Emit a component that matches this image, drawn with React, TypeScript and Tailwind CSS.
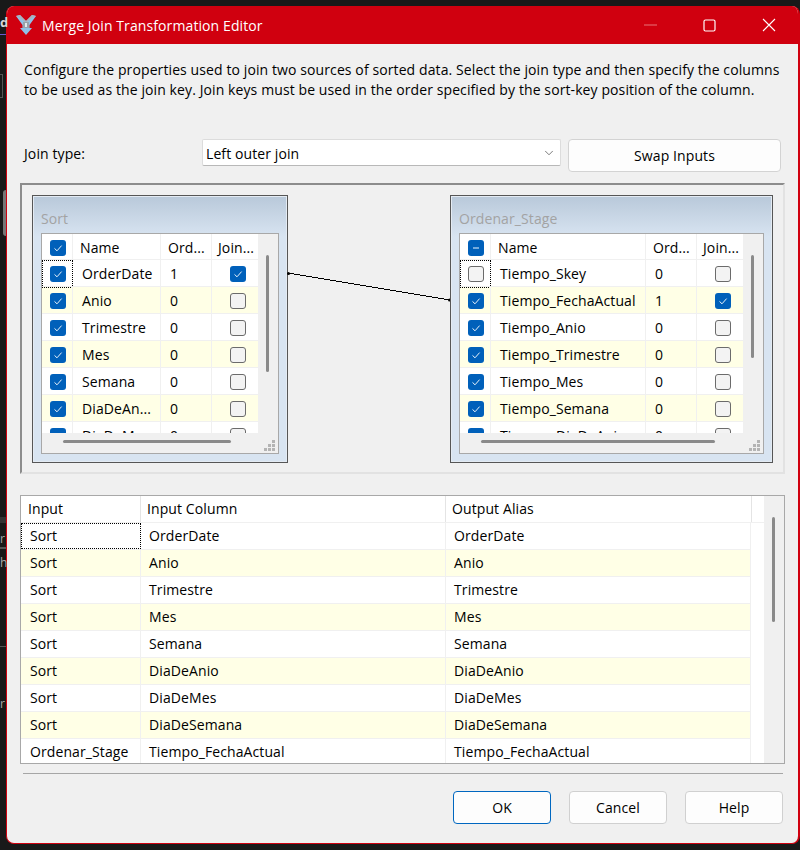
import { Fragment } from 'react'
import { ChevronDown } from 'lucide-react'

const FONT = "font-['Open_Sans','Noto_Sans',sans-serif]"

const sortRows = [
  { on: true, name: 'OrderDate', order: '1', join: true },
  { on: true, name: 'Anio', order: '0', join: false },
  { on: true, name: 'Trimestre', order: '0', join: false },
  { on: true, name: 'Mes', order: '0', join: false },
  { on: true, name: 'Semana', order: '0', join: false },
  { on: true, name: 'DiaDeAn...', order: '0', join: false },
  { on: true, name: 'DiaDeMes', order: '0', join: false },
]

const stageRows = [
  { on: false, name: 'Tiempo_Skey', order: '0', join: false },
  { on: true, name: 'Tiempo_FechaActual', order: '1', join: true },
  { on: true, name: 'Tiempo_Anio', order: '0', join: false },
  { on: true, name: 'Tiempo_Trimestre', order: '0', join: false },
  { on: true, name: 'Tiempo_Mes', order: '0', join: false },
  { on: true, name: 'Tiempo_Semana', order: '0', join: false },
  { on: true, name: 'Tiempo_DiaDeAni', order: '0', join: false },
]

const outputRows = [
  ['Sort', 'OrderDate', 'OrderDate'],
  ['Sort', 'Anio', 'Anio'],
  ['Sort', 'Trimestre', 'Trimestre'],
  ['Sort', 'Mes', 'Mes'],
  ['Sort', 'Semana', 'Semana'],
  ['Sort', 'DiaDeAnio', 'DiaDeAnio'],
  ['Sort', 'DiaDeMes', 'DiaDeMes'],
  ['Sort', 'DiaDeSemana', 'DiaDeSemana'],
  ['Ordenar_Stage', 'Tiempo_FechaActual', 'Tiempo_FechaActual'],
]

function Check({ state }: { state: 'on' | 'off' | 'mixed' }) {
  if (state === 'off') {
    return <div className="h-[16px] w-[16px] rounded-[3px] border-[1.5px] border-[#6b6b6b] bg-[#f3f3f3]" />
  }
  return (
    <div className="flex h-[16px] w-[16px] items-center justify-center rounded-[3px] bg-[#0060ba]">
      <svg width="10" height="10" viewBox="0 0 10 10" fill="none">
        {state === 'on' ? (
          <path d="M1.5 5.4 L4 7.8 L8.6 2.6" stroke="#e8f2fb" strokeWidth="1" />
        ) : (
          <path d="M2 5 H8" stroke="#9cc4e8" strokeWidth="1.4" />
        )}
      </svg>
    </div>
  )
}

function Grip() {
  const dots = [
    [8, 0],
    [4, 4],
    [8, 4],
    [0, 8],
    [4, 8],
    [8, 8],
  ]
  return (
    <svg className="absolute bottom-[2px] right-[3px]" width="11" height="11" viewBox="0 0 11 11">
      {dots.map(([x, y]) => (
        <rect key={`${x}-${y}`} x={x} y={y} width="3" height="3" fill="#b4b4b4" />
      ))}
    </svg>
  )
}

type NodeProps = {
  title: string
  position: string
  cols: string
  tableWidth: string
  vThumb: string
  hThumb: string
  headState: 'on' | 'mixed'
  rows: typeof sortRows
}

function SourceNode({ title, position, cols, tableWidth, vThumb, hThumb, headState, rows }: NodeProps) {
  return (
    <div className={`absolute top-[10px] h-[268px] border border-[#565656] bg-[#d8e4f1] ${position}`}>
      <div className="h-full bg-linear-to-b from-[#b9c9da] to-[#d8e4f1] to-[15%] border border-[#e4ebf3] px-[7px]">
        <div className="h-[36px] pt-[12px] text-[14px] leading-[20px] text-[#a3a3a3]">{title}</div>
        <div className="relative h-[221px] border border-[#a8a8a8] bg-[#f0f0f0]">
          <div className="flex h-[199px]">
            <div className={`h-full overflow-hidden bg-white ${tableWidth}`}>
              <div className={`grid h-[26px] border-b border-[#f0f0f0] ${cols}`}>
                <div className="flex items-center justify-center border-r border-[#f0f0f0] pl-[1px]">
                  <Check state={headState} />
                </div>
                <div className="border-r border-[#f0f0f0] pl-[7px] leading-[27px]">Name</div>
                <div className="border-r border-[#f0f0f0] pl-[7px] leading-[27px]">Ord...</div>
                <div className="pl-[6px] leading-[27px]">Join...</div>
              </div>
              {rows.map((row, i) => (
                <div
                  key={row.name}
                  className={`grid h-[27px] border-b border-[#f0f0f0] ${cols} ${i % 2 === 1 ? 'bg-[#ffffe6]' : 'bg-white'}`}
                >
                  <div
                    className={`flex items-center justify-center pl-[1px] ${
                      i === 0 ? 'border border-dotted border-black' : 'border-r border-[#f0f0f0]'
                    }`}
                  >
                    <Check state={row.on ? 'on' : 'off'} />
                  </div>
                  <div className="truncate border-r border-[#f0f0f0] pl-[9px] leading-[28px]">{row.name}</div>
                  <div className="border-r border-[#f0f0f0] pl-[9px] leading-[28px]">{row.order}</div>
                  <div className="flex items-center justify-center pl-[6px]">
                    <Check state={row.join ? 'on' : 'off'} />
                  </div>
                </div>
              ))}
            </div>
            <div className="w-[20px] pl-[8px] pt-[21px]">
              <div className={`w-[3px] rounded-full bg-[#8a8a8a] ${vThumb}`} />
            </div>
          </div>
          <div className="h-[20px] pt-[7px]">
            <div className={`h-[3px] rounded-full bg-[#8a8a8a] ${hThumb}`} />
          </div>
          <Grip />
        </div>
      </div>
    </div>
  )
}

function DialogButton({ label, primary }: { label: string; primary?: boolean }) {
  return (
    <button
      className={`h-[33px] w-[98px] rounded-[4px] border bg-[#fdfdfd] text-[14px] ${
        primary ? 'border-[#0067c0]' : 'border-[#d0d0d0]'
      }`}
    >
      {label}
    </button>
  )
}

export default function App() {
  return (
    <div className={`relative h-[850px] w-[800px] overflow-hidden bg-[#191919] pl-[6px] pt-[6px] text-[14px] tracking-[0.1px] text-black ${FONT}`}>
      {/* Bits of the window behind */}
      <div className="absolute left-0 top-[13px] text-[13px] font-bold text-[#d5d5d5]">d</div>
      <div className="absolute left-0 top-[34px] h-[1px] w-[6px] bg-[#6a5acd]" />
      <div className="absolute left-0 top-[74px] h-[24px] w-[3px] border-y border-r border-[#555]" />
      <div className="absolute left-[3px] top-[190px] h-[46px] w-[3px] rounded-l bg-[#777]" />
      <div className="absolute left-0 top-[517px] h-[6px] w-[6px] bg-[#333]" />
      <div className="absolute left-0 top-[530px] text-[12px] text-[#aaa]">r</div>
      <div className="absolute left-0 top-[547px] h-[2px] w-[6px] bg-[#555]" />
      <div className="absolute left-0 top-[554px] text-[12px] text-[#aaa]">h</div>
      <div className="absolute left-0 top-[646px] h-[1px] w-[6px] bg-[#555]" />
      <div className="absolute left-0 top-[695px] text-[12px] text-[#aaa]">r</div>

      {/* Dialog window */}
      <div className="flex h-[838px] w-[794px] flex-col overflow-hidden rounded-[8px] border-b-[1px] border-l-[1px] border-r-[2px] border-[#d0000f] bg-[#f0f0f0]">
        {/* Title bar */}
        <div className="flex h-[38px] shrink-0 items-center bg-[#d0000f] pl-[9px] text-white">
          <svg width="20" height="20" viewBox="0 0 20 20" className="mr-[6px] shrink-0">
            <path d="M0 1 L4 0 L10 6 L16 0 L20 1 L13.5 10 L13.5 13 L16 13 L10 20 L4 13 L6.5 13 L6.5 10 Z" fill="#8fc0e8" />
            <path d="M0 1 L4 0 L10 6 L16 0 L20 1 L16 3 L10 8 L4 3 Z" fill="#a9b4bd" />
            <path d="M7 7 H13 V13 H7 Z" fill="#98a2aa" />
            <path d="M9 8 H11 V12 H9 Z" fill="#e4e8ec" />
          </svg>
          <span className="text-[14px]">Merge Join Transformation Editor</span>
          <div className="ml-auto flex items-center">
            <svg width="14" height="2" viewBox="0 0 14 2" className="mr-[45px]">
              <path d="M0 1 H13" stroke="#e8747b" strokeWidth="1" />
            </svg>
            <svg width="13" height="13" viewBox="0 0 13 13" className="mr-[46px]">
              <rect x="1" y="1" width="11" height="11" rx="1.5" fill="none" stroke="white" strokeWidth="1.2" />
            </svg>
            <svg width="14" height="14" viewBox="0 0 14 14" className="mr-[22px]">
              <path d="M1 1 L13 13 M13 1 L1 13" stroke="white" strokeWidth="1.1" />
            </svg>
          </div>
        </div>

        {/* Description */}
        <div className="ml-[17px] mt-[16px] w-[765px] whitespace-nowrap leading-[20px]">
          Configure the properties used to join two sources of sorted data. Select the join type and then specify the columns
          <br />
          to be used as the join key. Join keys must be used in the order specified by the sort-key position of the column.
        </div>

        {/* Join type row */}
        <div className="ml-[17px] mt-[39px] flex h-[33px] items-start">
          <div className="w-[178px] leading-[30px]">Join type:</div>
          <div className="flex h-[27px] w-[359px] items-center justify-between rounded-[2px] border border-[#dcdcdc] border-b-[#b8b8b8] bg-white pl-[3px] pr-[4px]">
            <span className="pt-[1px]">Left outer join</span>
            <ChevronDown size={14} strokeWidth={1.2} className="text-[#444]" />
          </div>
          <button className="ml-[7px] h-[33px] w-[213px] rounded-[4px] border border-[#d3d3d3] bg-[#fdfdfd] text-[14px]">
            Swap Inputs
          </button>
        </div>

        {/* Designer surface */}
        <div className="relative ml-[13px] mt-[11px] h-[291px] w-[765px] shrink-0 border-b-2 border-l-2 border-r-2 border-t-2 border-b-[#e2e2e2] border-l-[#8c8c8c] border-r-[#e2e2e2] border-t-[#8c8c8c]">
          <SourceNode
            title="Sort"
            position="left-[10px] w-[256px]"
            cols="grid-cols-[31px_88px_51px_46px]"
            tableWidth="w-[216px]"
            vThumb="h-[117px]"
            hThumb="ml-[21px] w-[168px]"
            headState="on"
            rows={sortRows}
          />
          <svg className="absolute left-[264px] top-[86px]" width="166" height="32" viewBox="0 0 166 32">
            <path d="M2 2 L164 29" stroke="black" strokeWidth="1" fill="none" shapeRendering="crispEdges" />
            <circle cx="2.5" cy="2.5" r="1.5" fill="black" />
            <circle cx="163.5" cy="29" r="1.5" fill="black" />
          </svg>
          <SourceNode
            title="Ordenar_Stage"
            position="left-[428px] w-[323px]"
            cols="grid-cols-[31px_155px_51px_46px]"
            tableWidth="w-[283px]"
            vThumb="h-[103px]"
            hThumb="ml-[21px] w-[234px]"
            headState="mixed"
            rows={stageRows}
          />
        </div>

        {/* Output columns grid */}
        <div className="ml-[13px] mt-[21px] flex h-[269px] w-[765px] shrink-0 border border-[#a8a8a8] bg-[#f0f0f0]">
          <div className="h-full w-[743px] overflow-hidden bg-white">
            <div className="grid h-[27px] grid-cols-[120px_305px_306px] border-b border-[#f0f0f0]">
              <div className="border-r border-[#e4e4e4] pl-[7px] leading-[26px]">Input</div>
              <div className="border-r border-[#e4e4e4] pl-[6px] leading-[26px]">Input Column</div>
              <div className="border-r border-[#e4e4e4] pl-[6px] leading-[26px]">Output Alias</div>
            </div>
            {outputRows.map((row, i) => (
              <div
                key={row[1]}
                className={`grid h-[27px] w-[730px] grid-cols-[120px_305px_305px] border-b border-r border-[#f0f0f0] ${
                  i % 2 === 1 ? 'bg-[#ffffe6]' : 'bg-white'
                }`}
              >
                {row.map((cell, c) => (
                  <Fragment key={c}>
                    <div
                      className={
                        i === 0 && c === 0
                          ? 'border border-dotted border-black pl-[8px] leading-[23px]'
                          : `leading-[25px] ${c === 0 ? 'pl-[9px]' : 'pl-[8px]'} ${c < 2 ? 'border-r border-[#f0f0f0]' : ''}`
                      }
                    >
                      {cell}
                    </div>
                  </Fragment>
                ))}
              </div>
            ))}
          </div>
          <div className="w-[20px] pl-[8px] pt-[21px]">
            <div className="h-[105px] w-[3px] rounded-full bg-[#8a8a8a]" />
          </div>
        </div>

        {/* Separator */}
        <div className="ml-[16px] mt-[9px] h-[1px] w-[760px] shrink-0 bg-[#a6a6a6]" />

        {/* Buttons */}
        <div className="ml-[446px] mt-[17px] flex gap-[18px]">
          <DialogButton label="OK" primary />
          <DialogButton label="Cancel" />
          <DialogButton label="Help" />
        </div>
      </div>
    </div>
  )
}
